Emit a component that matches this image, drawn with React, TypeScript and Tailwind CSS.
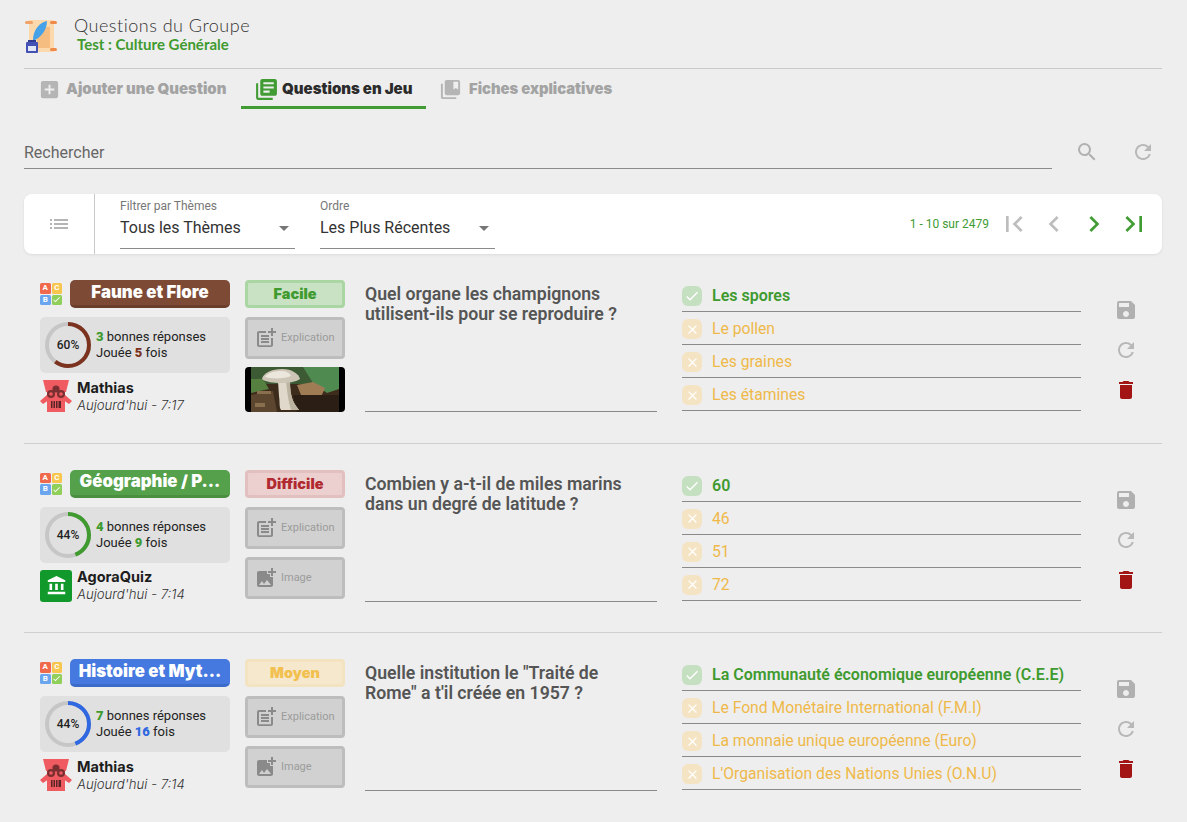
import {
  MdAccountBalance,
  MdAddBox,
  MdAddPhotoAlternate,
  MdArrowDropDown,
  MdCheck,
  MdChevronLeft,
  MdChevronRight,
  MdClose,
  MdCollectionsBookmark,
  MdDelete,
  MdFirstPage,
  MdLastPage,
  MdLibraryBooks,
  MdList,
  MdPostAdd,
  MdRefresh,
  MdSave,
  MdSearch,
} from 'react-icons/md';

const roboto = "font-['Roboto',sans-serif]";
const heavy = "font-['Inter',sans-serif]";

type Question = {
  theme: string;
  themeClass: string;
  level: string;
  levelClass: string;
  percent: number;
  ringColor: string;
  good: number;
  played: number;
  playedClass: string;
  author: string;
  date: string;
  photo: boolean;
  lines: string[];
  answers: string[];
};

const questions: Question[] = [
  {
    theme: 'Faune et Flore',
    themeClass: 'bg-[#7d4a36] border-[#6b3d2b]',
    level: 'Facile',
    levelClass: 'bg-[#c9e2c4] border-[#aad6a4] text-[#3f9a2f]',
    percent: 60,
    ringColor: '#7b3320',
    good: 3,
    played: 5,
    playedClass: 'text-[#7b3320]',
    author: 'Mathias',
    date: "Aujourd'hui - 7:17",
    photo: true,
    lines: ['Quel organe les champignons', 'utilisent-ils pour se reproduire ?'],
    answers: ['Les spores', 'Le pollen', 'Les graines', 'Les étamines'],
  },
  {
    theme: 'Géographie / P...',
    themeClass: 'bg-[#55a04a] border-[#4a8f40]',
    level: 'Difficile',
    levelClass: 'bg-[#ecd0d0] border-[#e2c0c0] text-[#b02a30]',
    percent: 44,
    ringColor: '#3f9a2f',
    good: 4,
    played: 9,
    playedClass: 'text-[#3f9a2f]',
    author: 'AgoraQuiz',
    date: "Aujourd'hui - 7:14",
    photo: false,
    lines: ['Combien y a-t-il de miles marins', 'dans un degré de latitude ?'],
    answers: ['60', '46', '51', '72'],
  },
  {
    theme: 'Histoire et Myt...',
    themeClass: 'bg-[#4579e0] border-[#3b6bc9]',
    level: 'Moyen',
    levelClass: 'bg-[#f5e8cc] border-[#f3e3c0] text-[#f2c04f]',
    percent: 44,
    ringColor: '#2f68e0',
    good: 7,
    played: 16,
    playedClass: 'text-[#2f68e0]',
    author: 'Mathias',
    date: "Aujourd'hui - 7:14",
    photo: false,
    lines: ['Quelle institution le "Traité de', 'Rome" a t\'il créée en 1957 ?'],
    answers: [
      'La Communauté économique européenne (C.E.E)',
      'Le Fond Monétaire International (F.M.I)',
      'La monnaie unique européenne (Euro)',
      "L'Organisation des Nations Unies (O.N.U)",
    ],
  },
];

function ScrollLogo() {
  return (
    <svg width="34" height="36" viewBox="0 0 34 36" className="shrink-0">
      <rect x="5" y="2" width="25" height="32" fill="#fbd9ad" />
      <rect x="13" y="9" width="13" height="21" fill="#f6bd80" />
      <rect x="1" y="3" width="8" height="3" rx="1.5" fill="#f0a268" />
      <rect x="26" y="3" width="7" height="3" rx="1.5" fill="#ee8a4a" />
      <rect x="26" y="30" width="7" height="3" rx="1.5" fill="#ee8a4a" />
      <path d="M23 3c-7 1-14 9-14 19 0 1 1 1 2 0 6-3 12-10 12-19z" fill="#45a2e8" />
      <rect x="4" y="22" width="8" height="3" fill="#2f3a90" />
      <rect x="2" y="24" width="12" height="11" rx="1" fill="#4350b4" />
      <rect x="4" y="28" width="8" height="5" fill="#e3e6f7" />
    </svg>
  );
}

function AbcLogo() {
  const cell = 'flex h-[10.5px] w-[10.5px] items-center justify-center rounded-[1.5px] text-[8px] font-bold leading-none text-white';
  return (
    <div className={`grid h-[22px] w-[22px] shrink-0 grid-cols-2 gap-px ${roboto}`}>
      <span className={`${cell} bg-[#f0694c]`}>A</span>
      <span className={`${cell} bg-[#f7c64f]`}>C</span>
      <span className={`${cell} bg-[#6ba5ee]`}>B</span>
      <span className={`${cell} bg-[#8fcf5a]`}>
        <MdCheck size={9} />
      </span>
    </div>
  );
}

function RobotAvatar() {
  return (
    <svg width="32" height="32" viewBox="0 0 32 32" className="shrink-0">
      <path d="M3 0h26l-3 12H6z" fill="#ef5b61" />
      <path d="M0 21l7-6 2 5-6 4zM32 21l-7-6-2 5 6 4z" fill="#ef5b61" />
      <rect x="7" y="12" width="18" height="20" fill="#ef5b61" />
      <circle cx="16" cy="9" r="3.6" fill="#7c2f30" />
      <circle cx="11" cy="14" r="4" fill="#7c2f30" />
      <circle cx="21" cy="14" r="4" fill="#7c2f30" />
      <circle cx="11" cy="14" r="1.8" fill="#ef5b61" />
      <circle cx="21" cy="14" r="1.8" fill="#ef5b61" />
      <rect x="11" y="21" width="10" height="7" fill="#5a2426" />
      <path d="M13 21v7M15.5 21v7M18 21v7" stroke="#ef5b61" strokeWidth="1" />
    </svg>
  );
}

function Ring({ percent, color }: { percent: number; color: string }) {
  const r = 21;
  const c = 2 * Math.PI * r;
  return (
    <div className="relative h-[46px] w-[46px] shrink-0">
      <svg width="46" height="46" viewBox="0 0 46 46" className="-rotate-90">
        <circle cx="23" cy="23" r={r} fill="none" stroke="#c6c6c6" strokeWidth="4" />
        <circle
          cx="23"
          cy="23"
          r={r}
          fill="none"
          stroke={color}
          strokeWidth="4"
          strokeDasharray={`${(c * percent) / 100} ${c}`}
        />
      </svg>
      <span className="absolute inset-0 flex items-center justify-center text-[12px] font-medium text-[#222]">
        {percent}%
      </span>
    </div>
  );
}

function Mushroom() {
  return (
    <div className="h-[45px] w-[100px] overflow-hidden rounded-[4px] bg-black px-[6px]">
      <svg width="88" height="45" viewBox="0 0 88 45" className="block">
        <rect width="88" height="45" fill="#3d2c1c" />
        <rect width="88" height="17" fill="#3c5a34" />
        <path d="M52 0h36v22l-12 4-14-10z" fill="#4f8a50" />
        <path d="M0 12h12l6 10-18 4z" fill="#55803f" />
        <path d="M46 18l16-3 12 6-4 9-20-2z" fill="#a07c55" />
        <path d="M0 28l22-4 4 21H0z" fill="#5c4630" />
        <path d="M6 24h14v3H6zM4 36h10v4H4zM70 30h12v5H70z" fill="#8a6f4e" />
        <path d="M42 28h46v17H46z" fill="#2b1e15" />
        <path d="M27 14h12c0 9 1 18 6 25l3 4H30c-2-3-1-8-2-14z" fill="#e0d9cb" />
        <path d="M35 14h4c0 9 1 18 6 25l3 4h-8c-3-9-4-20-5-29z" fill="#bdb3a1" />
        <path d="M11 12c1-6 10-10 20-10s17 5 18 10c-4 3-12 4-19 4s-16-1-19-4z" fill="#cdc5b6" />
        <path d="M14 10c2-4 9-6 16-6 5 0 9 2 10 5-6 3-20 3-26 1z" fill="#ece7dd" />
      </svg>
    </div>
  );
}

function AddButton({ label, image }: { label: string; image?: boolean }) {
  return (
    <div className="flex h-[42px] w-[100px] items-center rounded-[4px] border-[3px] border-[#bdbdbd] bg-[#d1d1d1] pl-[6px] text-[#9b9b9b]">
      {image ? <MdAddPhotoAlternate size={24} color="#8a8a8a" /> : <MdPostAdd size={24} color="#8a8a8a" />}
      <span className="ml-[3px] pt-px text-[11px]">{label}</span>
    </div>
  );
}

function QuestionRow({ q, last }: { q: Question; last: boolean }) {
  return (
    <div className={`flex pt-[26px] pb-[30.5px] ${last ? '' : 'border-b border-[#cfcfcf]'}`}>
      <div className="ml-[16px] flex w-[190px] shrink-0 flex-col">
        <div className="flex h-[28px] items-center gap-[8px]">
          <AbcLogo />
          <div
            className={`flex h-[28px] w-[160px] items-center justify-center rounded-[5px] border-b-[3px] text-[16.8px] font-black whitespace-nowrap text-white ${heavy} ${q.themeClass}`}
          >
            {q.theme}
          </div>
        </div>
        <div className="mt-[9px] flex h-[56px] items-center gap-[5px] rounded-[5px] bg-[#e0e0e0] pl-[5px]">
          <Ring percent={q.percent} color={q.ringColor} />
          <div className="text-[13px] leading-[16px] text-[#222]">
            <div>
              <b className="font-black text-[#3f9a2f]">{q.good}</b> bonnes réponses
            </div>
            <div>
              Jouée <b className={`font-black ${q.playedClass}`}>{q.played}</b> fois
            </div>
          </div>
        </div>
        <div className="mt-[7px] flex h-[32px] items-center gap-[5px]">
          {q.author === 'AgoraQuiz' ? (
            <div className="flex h-[32px] w-[32px] shrink-0 items-center justify-center rounded-[3px] bg-[#119a2b]">
              <MdAccountBalance size={21} color="#fff" />
            </div>
          ) : (
            <RobotAvatar />
          )}
          <div className={`${heavy} text-[#1d1d1d]`}>
            <div className="text-[14.5px] leading-[17px] font-bold">{q.author}</div>
            <div className="text-[13.2px] leading-[18px] font-light italic text-[#333]">{q.date}</div>
          </div>
        </div>
      </div>

      <div className="ml-[15px] flex w-[100px] shrink-0 flex-col">
        <div
          className={`flex h-[28px] items-center justify-center rounded-[4px] border-[3px] text-[14.5px] font-black ${heavy} ${q.levelClass}`}
        >
          {q.level}
        </div>
        <div className="mt-[9px]">
          <AddButton label="Explication" />
        </div>
        <div className="mt-[8px]">{q.photo ? <Mushroom /> : <AddButton label="Image" image />}</div>
      </div>

      <div className="ml-[20px] h-[132px] w-[292px] shrink-0 border-b border-[#8a8a8a] pt-[4px] text-[17.7px] leading-[20px] font-semibold text-[#555]">
        {q.lines.map((line) => (
          <div key={line} className="whitespace-nowrap">
            {line}
          </div>
        ))}
      </div>

      <div className="-mt-px ml-[25px] h-[132px] w-[399px] shrink-0">
        {q.answers.map((answer, i) => (
          <div key={answer} className="flex h-[33px] items-center gap-[10px] border-b border-[#8a8a8a] pt-[2px]">
            <span
              className={`flex h-[20px] w-[20px] items-center justify-center rounded-[6px] ${
                i === 0 ? 'bg-[#c5dfc1]' : 'bg-[#f5e4c4]'
              }`}
            >
              {i === 0 ? <MdCheck size={16} color="#fff" /> : <MdClose size={15} color="#fff" />}
            </span>
            <span className={i === 0 ? 'text-[16px] font-semibold text-[#3f9a2f]' : 'text-[15.7px] text-[#efb94a]'}>
              {answer}
            </span>
          </div>
        ))}
      </div>

      <div className="ml-[33px] flex w-[24px] shrink-0 flex-col items-center gap-[16px] pt-[18px]">
        <MdSave size={24} color="#b0b0b0" />
        <MdRefresh size={24} color="#b8b8b8" />
        <MdDelete size={24} color="#a31515" />
      </div>
    </div>
  );
}

export default function App() {
  return (
    <div className={`h-[822px] overflow-hidden bg-[#eeeeee] pr-[25px] pl-[24px] ${roboto}`}>
      <div className="flex h-[68px] items-start pt-[16px]">
        <div className="pt-[2px]">
          <ScrollLogo />
        </div>
        <div className="ml-[16px] font-['Lato',sans-serif]">
          <div className="text-[18px] leading-[18px] font-light tracking-[0.5px] text-[#333]">Questions du Groupe</div>
          <div className="mt-[2px] ml-[3px] text-[15px] leading-[16px] font-bold text-[#3f9a2f]">
            Test : Culture Générale
          </div>
        </div>
      </div>

      <div className={`flex h-[41px] items-start border-t border-[#c9c9c9] text-[15px] font-black ${heavy}`}>
        <div className="ml-[14px] flex h-[40px] w-[203px] items-center gap-[5px] text-[#a3a3a3]">
          <MdAddBox size={23} color="#b5b5b5" />
          Ajouter une Question
        </div>
        <div className="flex h-[40px] w-[185px] items-center gap-[3px] border-b-[3px] border-[#419c33] pt-[3px] pl-[13px] text-[#2b2b2b]">
          <MdLibraryBooks size={25} color="#419c33" />
          Questions en Jeu
        </div>
        <div className="ml-[13px] flex h-[40px] items-center gap-[7px] text-[14.8px] text-[#a3a3a3]">
          <MdCollectionsBookmark size={23} color="#b5b5b5" />
          Fiches explicatives
        </div>
      </div>

      <div className="mt-[18px] flex h-[42px] items-start">
        <div className="flex h-[42px] w-[1028px] items-center border-b border-[#8a8a8a] pt-[10px] text-[16px] text-[#666]">
          Rechercher
        </div>
        <div className="ml-[23px] flex gap-[32px] pt-[13px]">
          <MdSearch size={24} color="#b0b0b0" />
          <MdRefresh size={24} color="#b8b8b8" />
        </div>
      </div>

      <div className="mt-[25px] flex h-[60px] items-center rounded-[8px] bg-white shadow-[0_1px_3px_rgba(0,0,0,0.08)]">
        <div className="flex h-[60px] w-[71px] items-center justify-center border-r border-[#c9c9c9]">
          <MdList size={24} color="#b5b5b5" />
        </div>
        <div className="ml-[25px] flex gap-[25px]">
          {[
            ['Filtrer par Thèmes', 'Tous les Thèmes'],
            ['Ordre', 'Les Plus Récentes'],
          ].map(([label, value]) => (
            <div key={label} className="h-[49px] w-[175px] border-b border-[#8a8a8a]">
              <div className="-mt-[1px] text-[12px] leading-[14px] text-[#777]">{label}</div>
              <div className="flex h-[30px] items-center justify-between text-[16px] text-[#333]">
                {value}
                <MdArrowDropDown size={24} color="#777" className="-mr-[1px]" />
              </div>
            </div>
          ))}
        </div>
        <div className="ml-auto flex items-center pr-[12px]">
          <span className="mr-[9px] text-[12px] text-[#419c33]">1 - 10 sur 2479</span>
          <div className="flex gap-[8px]">
            <MdFirstPage size={32} color="#bdbdbd" />
            <MdChevronLeft size={32} color="#bdbdbd" />
            <MdChevronRight size={32} color="#419c33" />
            <MdLastPage size={32} color="#419c33" />
          </div>
        </div>
      </div>

      {questions.map((q, i) => (
        <QuestionRow key={q.theme} q={q} last={i === questions.length - 1} />
      ))}
    </div>
  );
}
